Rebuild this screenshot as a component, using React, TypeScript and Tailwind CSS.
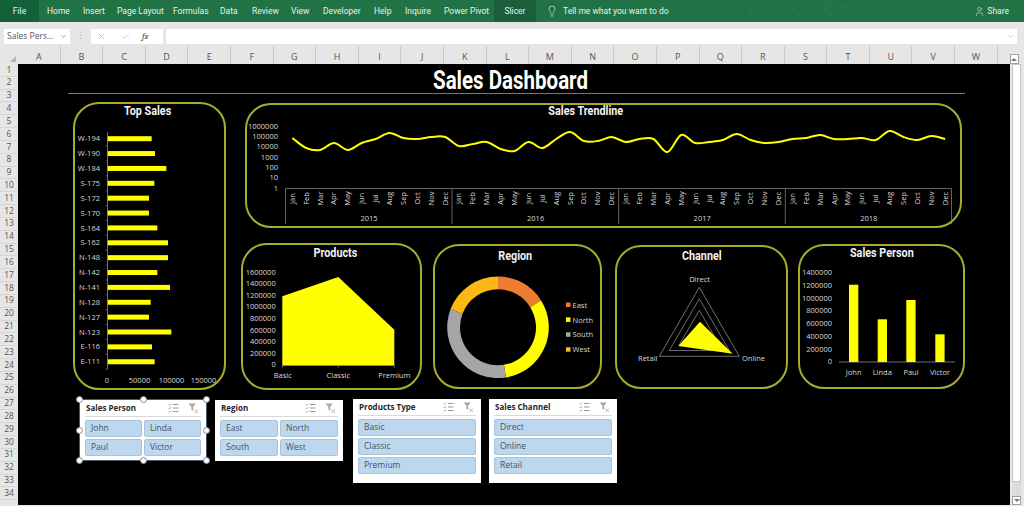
import { Check, ChevronDown, Lightbulb, User, X } from 'lucide-react';

const tabs = [
  ['Home', 'w-[36px]'],
  ['Insert', 'w-[34px]'],
  ['Page Layout', 'w-[56px]'],
  ['Formulas', 'w-[47px]'],
  ['Data', 'w-[32px]'],
  ['Review', 'w-[39px]'],
  ['View', 'w-[32px]'],
  ['Developer', 'w-[51px]'],
  ['Help', 'w-[31px]'],
  ['Inquire', 'w-[39px]'],
  ['Power Pivot', 'w-[50px]'],
];

const columns = 'ABCDEFGHIJKLMNOPQRSTUVW'.split('');
const rows = Array.from({ length: 34 }, (_, i) => i + 1);
const months = ['Jan', 'Feb', 'Mar', 'Apr', 'May', 'Jun', 'Jul', 'Aug', 'Sep', 'Oct', 'Nov', 'Dec'];

const topSales: [string, number][] = [
  ['W-194', 455], ['W-190', 465], ['W-184', 499], ['S-175', 463],
  ['S-172', 447], ['S-170', 447], ['S-164', 472], ['S-162', 504],
  ['N-148', 504], ['N-142', 472], ['N-141', 510], ['N-128', 452],
  ['N-127', 447], ['N-123', 514], ['E-116', 456], ['E-111', 464],
];

// y position of each month on the trend line, read off the picture
const trend = [
  138, 148, 150, 143, 150, 143, 139, 133, 138, 139, 137, 137,
  146, 144, 142, 149, 151, 142, 148, 139, 132, 141, 141, 137,
  142, 139, 139, 152, 135, 143, 142, 140, 134, 140, 143, 142,
  139, 138, 135, 139, 139, 138, 140, 131, 137, 140, 136, 139,
];

const smoothPath = (ys: number[], x0: number, step: number) => {
  const pts = ys.map((y, i) => [x0 + i * step, y]);
  let d = `M${pts[0][0]} ${pts[0][1]}`;
  for (let i = 0; i < pts.length - 1; i++) {
    const p0 = pts[Math.max(i - 1, 0)];
    const p1 = pts[i];
    const p2 = pts[i + 1];
    const p3 = pts[Math.min(i + 2, pts.length - 1)];
    const c1x = p1[0] + (p2[0] - p0[0]) / 6;
    const c1y = p1[1] + (p2[1] - p0[1]) / 6;
    const c2x = p2[0] - (p3[0] - p1[0]) / 6;
    const c2y = p2[1] - (p3[1] - p1[1]) / 6;
    d += ` C${c1x} ${c1y} ${c2x} ${c2y} ${p2[0]} ${p2[1]}`;
  }
  return d;
};

const donutSlice = (cx: number, cy: number, r0: number, r1: number, a0: number, a1: number) => {
  const pt = (r: number, a: number) => {
    const t = ((a - 90) * Math.PI) / 180;
    return `${cx + r * Math.cos(t)} ${cy + r * Math.sin(t)}`;
  };
  const large = a1 - a0 > 180 ? 1 : 0;
  return `M${pt(r1, a0)} A${r1} ${r1} 0 ${large} 1 ${pt(r1, a1)} L${pt(r0, a1)} A${r0} ${r0} 0 ${large} 0 ${pt(r0, a0)} Z`;
};

const label = 'fill-[#d9d9d9] text-[7.5px] [font-family:"Open_Sans",sans-serif]';

const Title = ({ children, className }: { children: string; className: string }) => (
  <div className={`flex justify-center ${className}`}>
    <span className="block scale-x-[0.8] whitespace-nowrap text-[13.5px] font-bold leading-none text-[#f2f2f2] [font-family:'Roboto',sans-serif]">
      {children}
    </span>
  </div>
);

const TopSalesChart = () => (
  <svg viewBox="75 125 149 263" className="block h-[263px] w-[149px]">
    <line x1="107.5" y1="132" x2="107.5" y2="369" stroke="#8c8c8c" strokeWidth="0.8" />
    {topSales.map(([name, end], i) => {
      const y = 138.7 + i * 14.87;
      return (
        <g key={name}>
          <line x1="105.5" y1={y + 7.4} x2="107.5" y2={y + 7.4} stroke="#8c8c8c" strokeWidth="0.6" />
          <rect x="107.7" y={y - 2.5} width={end / 3 - 107.7} height="5" fill="#ffff00" />
          <text x="100" y={y + 2.6} textAnchor="end" className={label}>{name}</text>
        </g>
      );
    })}
    {[['0', 107], ['50000', 139.5], ['100000', 171.5], ['150000', 203.5]].map(([t, x]) => (
      <text key={t} x={x} y="383" textAnchor="middle" className={label}>{t}</text>
    ))}
  </svg>
);

const TrendChart = () => (
  <svg viewBox="247 118 713 108" className="block h-[108px] w-[713px]">
    {['1000000', '100000', '10000', '1000', '100', '10', '1'].map((t, i) => (
      <text key={t} x="278" y={128.6 + i * 10.35} textAnchor="end" className={label}>{t}</text>
    ))}
    <path d="M285.5 224 V188.5 H951.5 V224 M452 188.5 V224 M618.7 188.5 V224 M785.3 188.5 V224" fill="none" stroke="#8c8c8c" strokeWidth="0.7" />
    <path d={smoothPath(trend, 292.3, 13.89)} fill="none" stroke="#ffff00" strokeWidth="2" />
    {trend.map((_, i) => {
      const x = 292.3 + i * 13.89;
      return (
        <text key={i} transform={`translate(${x + 2.5} 198.5) rotate(-90)`} textAnchor="middle" className={label}>
          {months[i % 12]}
        </text>
      );
    })}
    {['2015', '2016', '2017', '2018'].map((t, i) => (
      <text key={t} x={369 + i * 166.6} y="221" textAnchor="middle" className={label}>{t}</text>
    ))}
  </svg>
);

const ProductsChart = () => (
  <svg viewBox="243 264 177 122" className="block h-[122px] w-[177px]">
    {['1600000', '1400000', '1200000', '1000000', '800000', '600000', '400000', '200000', '0'].map((t, i) => (
      <text key={t} x="275.7" y={274.5 + i * 11.6} textAnchor="end" className={label}>{t}</text>
    ))}
    <polygon points="282.3,296.3 338.3,277 394.3,329.7 394.3,365.3 282.3,365.3" fill="#ffff00" />
    <path d="M282.3 365.5 H394.3 M282.3 365.5 V367.5 M338.3 365.5 V367.5 M394.3 365.5 V367.5" stroke="#a6a6a6" strokeWidth="0.7" fill="none" />
    <text x="282.7" y="378" textAnchor="middle" className={label}>Basic</text>
    <text x="338.3" y="378" textAnchor="middle" className={label}>Classic</text>
    <text x="394.3" y="378" textAnchor="middle" className={label}>Premium</text>
  </svg>
);

const regions: [string, string, number, number][] = [
  ['East', '#ed7d31', 0, 58],
  ['North', '#ffff00', 58, 171],
  ['South', '#a5a5a5', 171, 291],
  ['West', '#fdb813', 291, 360],
];

const RegionChart = () => (
  <svg viewBox="435 268 165 119" className="block h-[119px] w-[165px]">
    {regions.map(([name, color, a0, a1], i) => (
      <g key={name}>
        <path d={donutSlice(498, 327.3, 38, 50.8, a0, a1)} fill={color} />
        <rect x="566" y={302.5 + i * 14.9} width="4.5" height="4.5" fill={color} />
        <text x="572.5" y={307.6 + i * 14.9} className={label}>{name}</text>
      </g>
    ))}
  </svg>
);

const ChannelChart = () => {
  const cx = 699.3;
  const cy = 333.3;
  const ring = (f: number) =>
    `${cx},${cy - 46 * f} ${cx + 40 * f},${cy + 23 * f} ${cx - 40 * f},${cy + 23 * f}`;
  return (
    <svg viewBox="617 268 169 119" className="block h-[119px] w-[169px]">
      {[0.5, 0.75, 1].map((f) => (
        <polygon key={f} points={ring(f)} fill="none" stroke="#8c8c8c" strokeWidth="0.8" />
      ))}
      <polygon points="700,321.7 732.7,353.7 678.3,346" fill="#ffff00" />
      <text x="699.6" y="281.8" textAnchor="middle" className={label}>Direct</text>
      <text x="657.5" y="360.5" textAnchor="end" className={label}>Retail</text>
      <text x="742" y="360.8" className={label}>Online</text>
    </svg>
  );
};

const PersonChart = () => (
  <svg viewBox="800 264 163 122" className="block h-[122px] w-[163px]">
    {['1400000', '1200000', '1000000', '800000', '600000', '400000', '200000', '0'].map((t, i) => (
      <text key={t} x="832" y={275.3 + i * 12.73} textAnchor="end" className={label}>{t}</text>
    ))}
    <line x1="839" y1="362" x2="955" y2="362" stroke="#8c8c8c" strokeWidth="0.8" />
    {[
      ['John', 849, 284.7, 853.7],
      ['Linda', 877.7, 319.3, 882.3],
      ['Paul', 906.3, 300, 911],
      ['Victor', 935.3, 334.3, 940],
    ].map(([name, x, top, c]) => (
      <g key={name as string}>
        <rect x={x} y={top} width="9.3" height={362 - (top as number)} fill="#ffff00" />
        <text x={c} y="375" textAnchor="middle" className={label}>{name}</text>
      </g>
    ))}
  </svg>
);

const RibbonPattern = () => (
  <svg viewBox="0 0 240 22" className="ml-[32px] h-[22px] w-[240px]" fill="none" stroke="#2a7a50" strokeWidth="1">
    <path d="M0 8L8 3L12 8L5 12Z M24 0L30 5L36 0 M48 12L56 4L60 8L52 14Z" />
    <path d="M84 8L92 2L96 6L88 12Z M96 14L104 6L108 10L100 15Z" />
    <path d="M124 2V12L130 15L132 6Z M136 2L142 8L148 2 M146 6L150 14L154 6" />
    <path d="M172 6L180 2L184 8L176 12Z" />
  </svg>
);

const MultiSelectIcon = () => (
  <svg viewBox="0 0 11 10" className="h-[10px] w-[11px]">
    <path d="M5 1.5H10.5M5 5H10.5M5 8.5H10.5" stroke="#8a8a8a" strokeWidth="0.9" />
    <path d="M0.5 1.5L1.5 2.5L3.2 0.5M0.5 5L1.5 6L3.2 4M0.5 8.5L1.5 9.5L3.2 7.5" stroke="#9a9a7a" strokeWidth="0.8" fill="none" />
  </svg>
);

const ClearFilterIcon = () => (
  <svg viewBox="0 0 11 11" className="h-[11px] w-[11px]">
    <path d="M0.5 0.5H8L5.2 3.8V8L3.4 6.8V3.8Z" fill="#a8a8a8" />
    <path d="M6.5 6.5L10 10M10 6.5L6.5 10" stroke="#c9a0a0" strokeWidth="0.9" />
  </svg>
);

const Handle = ({ className }: { className: string }) => (
  <span className={`absolute h-[7px] w-[7px] rounded-full border border-[#8c8c8c] bg-white ${className}`} />
);

type SlicerProps = {
  title: string;
  items: string[];
  twoCols?: boolean;
  selected?: boolean;
  className: string;
};

const Slicer = ({ title, items, twoCols, selected, className }: SlicerProps) => (
  <div className={`relative flex w-[128px] flex-col bg-white px-[5px] [font-family:'Open_Sans',sans-serif] ${selected ? 'border border-[#4a5a6a]' : ''} ${className}`}>
    <div className="flex h-[17px] items-center justify-between border-b border-[#d9d9d9] pl-px pr-[2px]">
      <span className="text-[8px] font-bold text-[#262626]">{title}</span>
      <span className="flex items-center gap-[9px]">
        <MultiSelectIcon />
        <ClearFilterIcon />
      </span>
    </div>
    <div className={`mt-[3px] grid gap-[2px] ${twoCols ? 'grid-cols-2' : 'grid-cols-1'}`}>
      {items.map((item) => (
        <div key={item} className="flex h-[17px] items-center rounded-[2px] border border-[#a9c3da] bg-[#bdd7ee] pl-[5px] text-[8.5px] text-[#44546a]">
          {item}
        </div>
      ))}
    </div>
    {selected && (
      <>
        <Handle className="-left-[4px] -top-[4px]" />
        <Handle className="left-[60px] -top-[4px]" />
        <Handle className="-right-[4px] -top-[4px]" />
        <Handle className="-left-[4px] top-[27px]" />
        <Handle className="-right-[4px] top-[27px]" />
        <Handle className="-left-[4px] -bottom-[4px]" />
        <Handle className="left-[60px] -bottom-[4px]" />
        <Handle className="-right-[4px] -bottom-[4px]" />
      </>
    )}
  </div>
);

const card = 'rounded-[26px] border-2 border-[#a9ab2e]';

export default function App() {
  return (
    <div className="flex h-[506px] w-[1024px] flex-col overflow-hidden bg-[#e6e6e6] [font-family:'Open_Sans',sans-serif]">
      {/* ribbon */}
      <div className="flex h-[22px] shrink-0 items-center bg-[#217346] text-[8.5px] text-[#e8f1ec] [font-family:'Roboto',sans-serif]">
        <div className="flex h-full w-[39px] items-center justify-center bg-[#14603a]">File</div>
        <div className="w-[8px]" />
        {tabs.map(([name, w]) => (
          <span key={name} className={w}>{name}</span>
        ))}
        <div className="flex h-full w-[42px] items-center justify-center bg-[#1a5f3a]">Slicer</div>
        <Lightbulb size={12} strokeWidth={1.3} className="ml-[10px]" />
        <span className="ml-[5px] whitespace-nowrap">Tell me what you want to do</span>
        <RibbonPattern />
        <User size={11} strokeWidth={1.2} className="ml-auto" />
        <span className="ml-[2px] mr-[15px] text-[8.5px]">Share</span>
      </div>

      {/* formula bar */}
      <div className="flex h-[24px] shrink-0 items-end pb-[2px] pl-[4px] text-[8.5px] text-[#555]">
        <div className="flex h-[15px] w-[66px] items-center justify-between bg-white px-[3px]">
          <span>Sales Pers...</span>
          <ChevronDown size={7} strokeWidth={2.5} className="text-[#777]" />
        </div>
        <div className="flex h-[15px] w-[21px] items-center justify-center text-[#aaa]">⋮</div>
        <div className="flex h-[15px] w-[72px] items-center bg-white pl-[6px]">
          <X size={9} className="text-[#b5b5b5]" />
          <Check size={9} className="ml-[15px] text-[#b5b5b5]" />
          <span className="ml-[12px] font-serif text-[9px] italic text-[#444]">fx</span>
        </div>
        <div className="ml-[3px] flex h-[15px] w-[851px] items-center justify-end bg-white pr-[3px]">
          <ChevronDown size={7} className="text-[#aaa]" />
        </div>
      </div>

      {/* column headers */}
      <div className="flex h-[18px] shrink-0 items-center">
        <div className="flex h-full w-[18px] items-end justify-end pb-[2px] pr-[2px]">
          <div className="h-0 w-0 border-b-[6px] border-l-[6px] border-b-[#b5b5b5] border-l-transparent" />
        </div>
        {columns.map((c) => (
          <div key={c} className="flex h-full w-[42.6px] items-center justify-center border-r border-[#c8c8c8] pt-[4px] text-[9px] text-[#555]">
            {c}
          </div>
        ))}
        <div className="ml-[12px] flex h-[10px] w-[9px] items-center justify-center self-end border border-[#a0a0a0] bg-white">
          <div className="h-0 w-0 border-x-[3px] border-b-[3px] border-x-transparent border-b-[#777]" />
        </div>
      </div>

      <div className="flex min-h-0 flex-1 overflow-hidden">
        {/* row headers */}
        <div className="w-[18px] shrink-0">
          {rows.map((r) => (
            <div key={r} className="flex h-[12.84px] items-center justify-center border-b border-[#d4d4d4] text-[8.5px] text-[#555]">
              {r}
            </div>
          ))}
        </div>

        {/* sheet */}
        <div className="h-[441px] w-[992px] shrink-0 bg-black">
          <div className="ml-[50px] flex h-[30px] w-[897px] items-end justify-center border-b border-[#7d7a4c] pr-[12px]">
            <span className="block scale-x-[0.82] whitespace-nowrap text-[25px] font-bold leading-none text-white [font-family:'Roboto',sans-serif]">
              Sales Dashboard
            </span>
          </div>

          <div className="flex">
            <div className={`ml-[55px] mt-[8px] h-[288px] w-[153px] ${card}`}>
              <Title className="h-[21px] pr-[3px]">Top Sales</Title>
              <TopSalesChart />
            </div>

            <div className="ml-[15px]">
              <div className={`ml-[4px] mt-[9px] h-[125px] w-[717px] ${card}`}>
                <Title className="h-[13px] -translate-y-px pr-[36px]">Sales Trendline</Title>
                <TrendChart />
              </div>
              <div className="mt-[15px] flex items-start">
                <div className={`h-[147px] w-[181px] ${card}`}>
                  <Title className="h-[19px] pl-[8px] pt-px">Products</Title>
                  <ProductsChart />
                </div>
                <div className={`ml-[11px] mt-[1px] h-[145px] w-[169px] ${card}`}>
                  <Title className="h-[22px] pr-[5px] pt-[3px]">Region</Title>
                  <RegionChart />
                </div>
                <div className={`ml-[13px] mt-[2px] h-[144px] w-[173px] ${card}`}>
                  <Title className="h-[21px] pt-[2px]">Channel</Title>
                  <ChannelChart />
                </div>
                <div className={`ml-[10px] mt-[1px] h-[145px] w-[167px] ${card}`}>
                  <Title className="h-[18px]">Sales Person</Title>
                  <PersonChart />
                </div>
              </div>
            </div>
          </div>

          <div className="ml-[61px] mt-[9px] flex items-start">
            <Slicer title="Sales Person" items={['John', 'Linda', 'Paul', 'Victor']} twoCols selected className="h-[62px]" />
            <Slicer title="Region" items={['East', 'North', 'South', 'West']} twoCols className="ml-[8px] mt-[1px] h-[61px]" />
            <Slicer title="Products Type" items={['Basic', 'Classic', 'Premium']} className="ml-[10px] h-[84px]" />
            <Slicer title="Sales Channel" items={['Direct', 'Online', 'Retail']} className="ml-[8px] h-[84px]" />
          </div>
        </div>

        {/* scrollbar */}
        <div className="flex w-[14px] shrink-0 flex-col pl-[2px] pr-[3px]">
          <div className="h-[418px] border border-[#c4c4c4] bg-white" />
          <div className="h-[14px] bg-[#dcdcdc]" />
          <div className="flex h-[9px] items-center justify-center border border-[#a0a0a0] bg-white">
            <div className="h-0 w-0 border-x-[3px] border-t-[3px] border-x-transparent border-t-[#777]" />
          </div>
        </div>
      </div>
    </div>
  );
}
